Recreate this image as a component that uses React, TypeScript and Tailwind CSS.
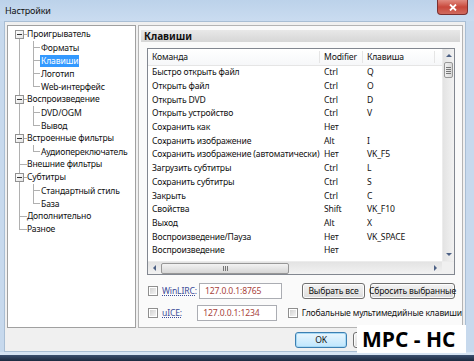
import React from 'react'

type TreeItem = { t: string; lvl: 0 | 1; exp?: boolean; last?: boolean; sel?: boolean }

const tree: TreeItem[] = [
  { t: 'Проигрыватель', lvl: 0, exp: true },
  { t: 'Форматы', lvl: 1 },
  { t: 'Клавиши', lvl: 1, sel: true },
  { t: 'Логотип', lvl: 1 },
  { t: 'Web-интерфейс', lvl: 1, last: true },
  { t: 'Воспроизведение', lvl: 0, exp: true },
  { t: 'DVD/OGM', lvl: 1 },
  { t: 'Вывод', lvl: 1, last: true },
  { t: 'Встроенные фильтры', lvl: 0, exp: true },
  { t: 'Аудиопереключатель', lvl: 1, last: true },
  { t: 'Внешние фильтры', lvl: 0 },
  { t: 'Субтитры', lvl: 0, exp: true },
  { t: 'Стандартный стиль', lvl: 1 },
  { t: 'База', lvl: 1, last: true },
  { t: 'Дополнительно', lvl: 0 },
  { t: 'Разное', lvl: 0 },
]

const keys: [string, string, string][] = [
  ['Быстро открыть файл', 'Ctrl', 'Q'],
  ['Открыть файл', 'Ctrl', 'O'],
  ['Открыть DVD', 'Ctrl', 'D'],
  ['Открыть устройство', 'Ctrl', 'V'],
  ['Сохранить как', 'Нет', ''],
  ['Сохранить изображение', 'Alt', 'I'],
  ['Сохранить изображение (автоматически)', 'Нет', 'VK_F5'],
  ['Загрузить субтитры', 'Ctrl', 'L'],
  ['Сохранить субтитры', 'Ctrl', 'S'],
  ['Закрыть', 'Ctrl', 'C'],
  ['Свойства', 'Shift', 'VK_F10'],
  ['Выход', 'Alt', 'X'],
  ['Воспроизведение/Пауза', 'Нет', 'VK_SPACE'],
  ['Воспроизведение', 'Нет', ''],
]

function TreeRow({ item, first, lastRoot }: { item: TreeItem; first: boolean; lastRoot: boolean }) {
  return (
    <div className="relative h-[13px] flex items-center">
      {/* root level line */}
      <span
        className={`absolute left-[11px] w-px bg-[#b0b0b0] ${first ? 'top-1/2 bottom-0' : lastRoot ? 'top-0 h-1/2' : 'top-0 bottom-0'}`}
      />
      {item.lvl === 0 ? (
        <>
          <span className="absolute left-[11px] top-[6px] w-[8px] h-px bg-[#b0b0b0]" />
          {item.exp && (
            <span className="absolute left-[7px] top-[2px] w-[9px] h-[9px] border border-[#929292] bg-gradient-to-br from-white to-[#e4e4e4] flex items-center justify-center">
              <span className="w-[5px] h-px bg-[#333]" />
            </span>
          )}
          <span className="ml-[18px] px-[1px] leading-[13px] whitespace-nowrap">{item.t}</span>
        </>
      ) : (
        <>
          <span className={`absolute left-[25px] w-px bg-[#b0b0b0] top-0 ${item.last ? 'h-1/2' : 'bottom-0'}`} />
          <span className="absolute left-[25px] top-[6px] w-[7px] h-px bg-[#b0b0b0]" />
          <span
            className={`ml-[32px] px-[1px] leading-[12px] whitespace-nowrap ${item.sel ? 'bg-[#3399ff] text-white' : ''}`}
          >
            {item.t}
          </span>
        </>
      )}
    </div>
  )
}

function Checkbox() {
  return (
    <span className="block w-[10px] h-[10px] border border-[#8f8f8f] bg-white p-px shrink-0">
      <span className="block w-full h-full bg-gradient-to-br from-[#d2d2d2] to-[#f4f4f4]" />
    </span>
  )
}

function Button({ children, def, className = '' }: { children?: React.ReactNode; def?: boolean; className?: string }) {
  return (
    <button
      type="button"
      className={`h-[16px] rounded-[3px] border leading-none whitespace-nowrap flex items-center justify-center ${
        def
          ? 'border-[#3c7fb1] bg-gradient-to-b from-[#eaf6fd] to-[#bee6fd] shadow-[inset_0_0_0_1px_#a7d9f5]'
          : 'border-[#707070] bg-gradient-to-b from-[#f4f4f4] to-[#dcdcdc] shadow-[inset_0_0_0_1px_#fcfcfc]'
      } ${className}`}
    >
      {children}
    </button>
  )
}

function Arrow({ dir }: { dir: 'up' | 'down' | 'left' | 'right' }) {
  const pts = {
    up: '1,4 4,1 7,4',
    down: '1,1 4,4 7,1',
    left: '4,1 1,4 4,7',
    right: '1,1 4,4 1,7',
  }[dir]
  const vert = dir === 'up' || dir === 'down'
  return (
    <svg width={vert ? 8 : 5} height={vert ? 5 : 8} viewBox={vert ? '0 0 8 5' : '0 0 5 8'}>
      <polygon points={pts} fill="#4d6185" />
    </svg>
  )
}

function VScroll() {
  return (
    <div className="w-[12px] flex flex-col bg-gradient-to-r from-[#e3e3e3] to-[#f2f2f2] border-l border-[#ececec]">
      <div className="h-[13px] flex items-center justify-center">
        <Arrow dir="up" />
      </div>
      <div className="h-[16px] mx-px rounded-[2px] border border-[#979797] bg-gradient-to-r from-[#f0f0f0] to-[#d8d8d8] flex flex-col items-center justify-center gap-px">
        <span className="w-[5px] h-px bg-[#777]" />
        <span className="w-[5px] h-px bg-[#777]" />
        <span className="w-[5px] h-px bg-[#777]" />
        <span className="w-[5px] h-px bg-[#777]" />
      </div>
      <div className="flex-1" />
      <div className="h-[13px] flex items-center justify-center">
        <Arrow dir="down" />
      </div>
    </div>
  )
}

function HScroll() {
  return (
    <div className="h-[13px] flex bg-gradient-to-b from-[#e3e3e3] to-[#f2f2f2] border-t border-[#ececec]">
      <div className="flex-1 flex items-center">
        <div className="w-[13px] flex items-center justify-center">
          <Arrow dir="left" />
        </div>
        <div className="w-[128px] h-[11px] rounded-[2px] border border-[#979797] bg-gradient-to-b from-[#f3f3f3] to-[#d6d6d6] flex items-center justify-center gap-px">
          <span className="w-px h-[5px] bg-[#777]" />
          <span className="w-px h-[5px] bg-[#777]" />
          <span className="w-px h-[5px] bg-[#777]" />
        </div>
        <div className="flex-1" />
        <div className="w-[13px] flex items-center justify-center">
          <Arrow dir="right" />
        </div>
      </div>
      <div className="w-[12px] bg-[#f0f0f0]" />
    </div>
  )
}

function KeyList() {
  return (
    <div className="ml-[8px] mt-[6px] w-[308px] h-[227px] border border-[#828790] bg-white flex flex-col">
      <div className="flex-1 flex min-h-0">
        <div className="flex-1 flex flex-col overflow-hidden">
          <div className="h-[17px] flex items-center border-b border-[#e5e5e5] bg-gradient-to-b from-white to-[#f6f7f9]">
            <span className="w-[172px] pl-[4px] border-r border-[#e5e5e5]">Команда</span>
            <span className="w-[43px] pl-[4px] border-r border-[#e5e5e5]">Modifier</span>
            <span className="w-[72px] pl-[4px] border-r border-[#e5e5e5]">Клавиша</span>
          </div>
          {keys.map(([c, m, k]) => (
            <div key={c} className="h-[13.7px] flex items-center leading-[13px]">
              <span className="w-[172px] pl-[4px] whitespace-nowrap">{c}</span>
              <span className="w-[43px] pl-[4px]">{m}</span>
              <span className="w-[72px] pl-[4px]">{k}</span>
            </div>
          ))}
        </div>
        <VScroll />
      </div>
      <HScroll />
    </div>
  )
}

function TextBox({ value }: { value: string }) {
  return (
    <div className="w-[83px] h-[16px] border border-[#abadb3] bg-white pl-[5px] flex items-center text-[#a8433c]">
      {value}
    </div>
  )
}

export default function App() {
  return (
    <div className="w-[474px] h-[361px] overflow-hidden relative flex flex-col bg-[#c7d9ed] font-['Noto_Sans',sans-serif] text-[8.6px] tracking-[-0.15px] text-[#111]">
      <div className="h-[21px] flex items-start justify-between bg-gradient-to-b from-[#bcd2ea] to-[#cadcf0]">
        <span className="pl-[5px] pt-[4px] text-[9px] leading-[13px]">Настройки</span>
        <div className="mr-[6px] w-[31px] h-[15px] rounded-b-[4px] border border-t-0 border-[#7a3030] bg-gradient-to-b from-[#e08a80] via-[#c8473b] to-[#d06a5e] flex items-center justify-center">
          <svg width="8" height="7" viewBox="0 0 8 7">
            <path d="M1 0.5 L7 6.5 M7 0.5 L1 6.5" stroke="white" strokeWidth="1.8" />
          </svg>
        </div>
      </div>

      <div className="ml-[4px] mr-[8px] h-[331px] bg-[#f0f0f0] border border-[#a9bed4] flex flex-col">
        <div className="pt-[3px] px-[2px] flex gap-[2px] h-[306px]">
          <div className="w-[129px] h-[303px] border border-[#a0a0a0] bg-white pt-[2px]">
            {tree.map((it, i) => (
              <TreeRow key={it.t} item={it} first={i === 0} lastRoot={i === tree.length - 1} />
            ))}
          </div>
          <div className="w-[325px] h-[303px] border border-[#b4b4b4] bg-[#fafafa] flex flex-col">
            <div className="mx-[2px] mt-[4px] h-[12px] bg-gradient-to-b from-[#e8e8e8] to-[#d6d6d6] flex items-center pl-[3px]">
              <span className="text-[10px] font-bold leading-none tracking-normal">Клавиши</span>
            </div>
            <KeyList />
            <div className="ml-[9px] mt-[8px] flex items-center h-[16px]">
              <Checkbox />
              <span className="ml-[4px] w-[37px] text-[#3b4a98] underline decoration-dotted">WinLIRC:</span>
              <TextBox value="127.0.0.1:8765" />
              <Button className="ml-[20px] w-[63px]">Выбрать все</Button>
              <Button className="ml-[5px] w-[85px]">Сбросить выбранные</Button>
            </div>
            <div className="ml-[9px] mt-[6px] flex items-center h-[16px]">
              <Checkbox />
              <span className="ml-[4px] w-[37px] text-[#3b4a98] underline decoration-dotted">uICE:</span>
              <TextBox value="127.0.0.1:1234" />
              <span className="ml-[11px]">
                <Checkbox />
              </span>
              <span className="ml-[4px] whitespace-nowrap">Глобальные мультимедийные клавиши</span>
            </div>
          </div>
        </div>
        <div className="mt-[4px] pr-[2px] flex justify-end gap-[6px]">
          <Button def className="w-[52px]">OK</Button>
          {/* Cancel / Apply sit under the MPC-HC label */}
          <Button className="w-[52px]" />
          <Button className="w-[52px]" />
        </div>
      </div>

      <div className="h-[3px] bg-[#d7e4f3]" />
      <div className="h-[6px] bg-gradient-to-b from-[#3b4f6e] to-[#1c2a40]" />

      <div className="absolute left-[357px] top-[325px] w-[109px] h-[28px] bg-white flex items-center pl-[5px]">
        <span className="font-['Open_Sans',sans-serif] font-bold text-[21px] leading-none tracking-normal text-black">MPC - HC</span>
      </div>
    </div>
  )
}
